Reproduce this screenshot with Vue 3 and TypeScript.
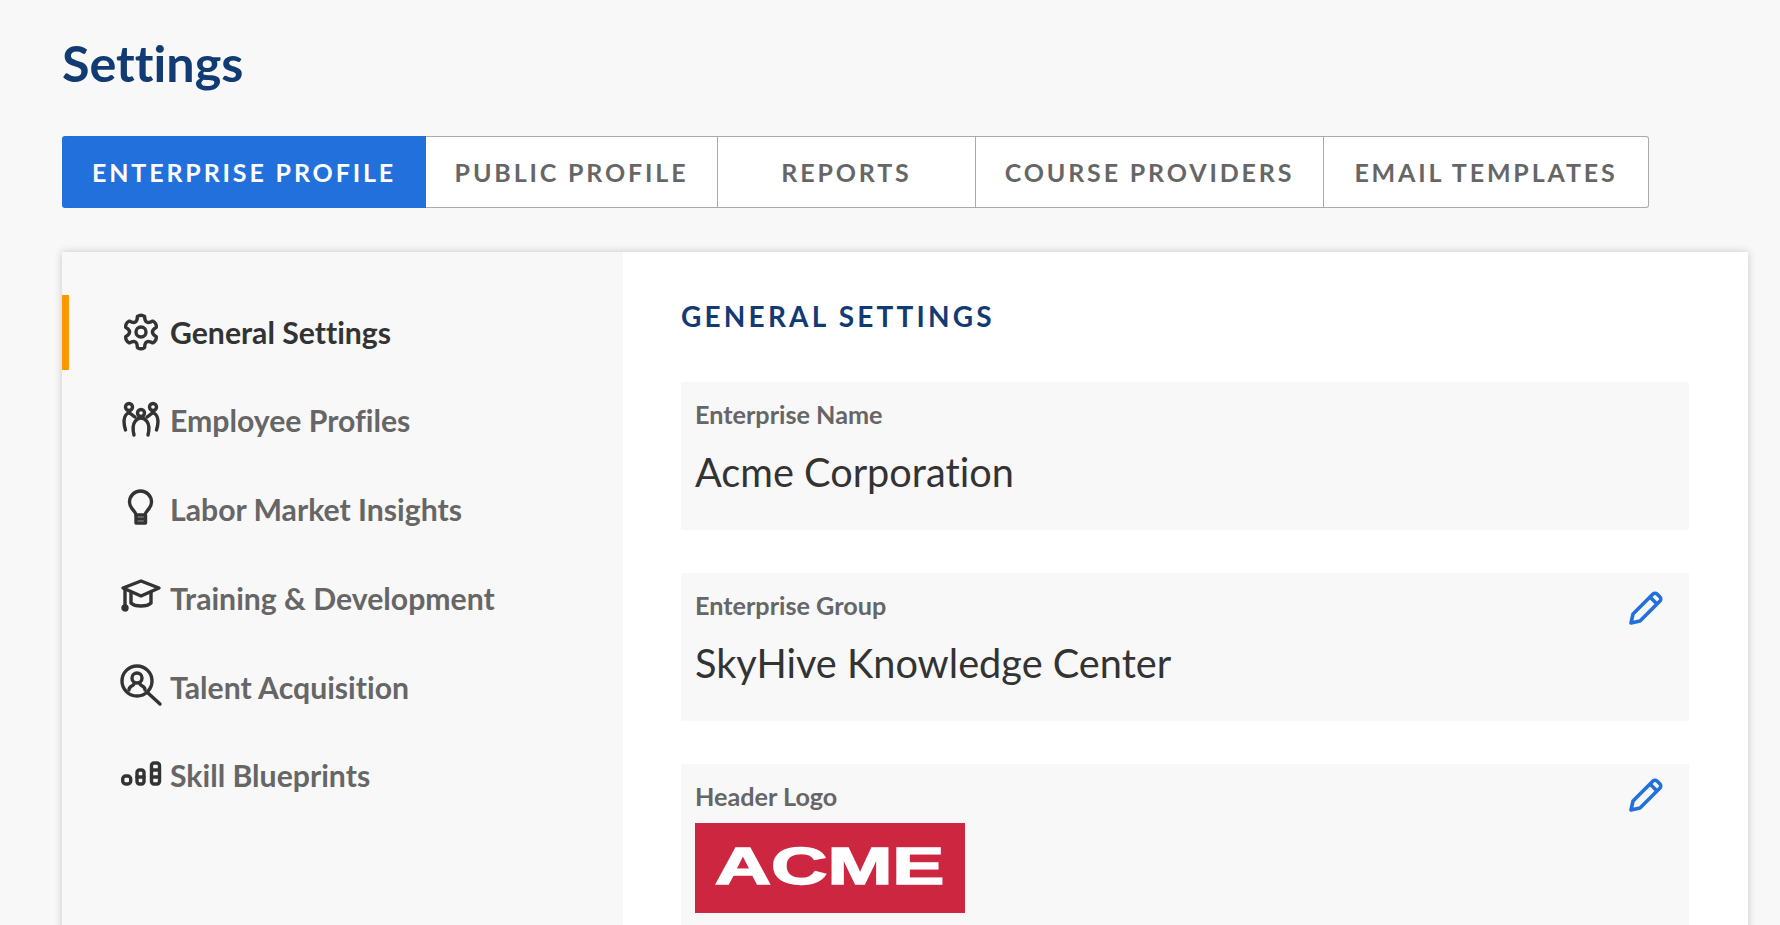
<script setup lang="ts">
const tabs = [
  { label: 'ENTERPRISE PROFILE', width: 364, active: true },
  { label: 'PUBLIC PROFILE', width: 292, active: false },
  { label: 'REPORTS', width: 258, active: false },
  { label: 'COURSE PROVIDERS', width: 348, active: false },
  { label: 'EMAIL TEMPLATES', width: 325, active: false },
]
const navItems = [
  { label: 'General Settings', icon: 'gear', active: true },
  { label: 'Employee Profiles', icon: 'people', active: false },
  { label: 'Labor Market Insights', icon: 'bulb', active: false },
  { label: 'Training & Development', icon: 'cap', active: false },
  { label: 'Talent Acquisition', icon: 'search', active: false },
  { label: 'Skill Blueprints', icon: 'bars', active: false },
]

function polar(deg: number, radius: number): string {
  const rad = (deg * Math.PI) / 180
  return `${(20 + radius * Math.cos(rad)).toFixed(2)} ${(20 + radius * Math.sin(rad)).toFixed(2)}`
}

function gearPath(): string {
  const outer = 16
  const inner = 7.5
  let d = `M${polar(-90 - 13, outer)}`
  for (let k = 0; k < 6; k++) {
    const a = -90 + 60 * k
    d += ` Q${polar(a, outer + 2)} ${polar(a + 13, outer)}`
    d += ` Q${polar(a + 30, inner)} ${polar(a + 47, outer)}`
  }
  return d + 'Z'
}
const gear = gearPath()
</script>

<template>
  <div class="page">
    <h1 class="title">Settings</h1>
    <div class="tabs">
      <div
        v-for="t in tabs"
        :key="t.label"
        class="tab"
        :class="{ active: t.active }"
        :style="{ width: t.width + 'px' }"
      >{{ t.label }}</div>
    </div>
    <div class="card">
      <aside class="side">
        <div v-for="n in navItems" :key="n.label" class="nav" :class="{ on: n.active }">
          <svg class="ico" viewBox="0 0 40 40" fill="none" stroke="#333" stroke-width="3.400" stroke-linecap="round" stroke-linejoin="round">
            <template v-if="n.icon === 'gear'">
              <path :d="gear" />
              <circle cx="20" cy="20" r="5" />
            </template>
            <template v-else-if="n.icon === 'people'">
              <circle cx="8" cy="7" r="3.500" />
              <circle cx="20" cy="13" r="3.500" />
              <circle cx="32" cy="7" r="3.500" />
              <path d="M14 17c-2-1-4-4-6-4s-5 3-5 8c0 3 .5 6 1.500 9M26 17c2-1 4-4 6-4s5 3 5 8c0 3-.5 6-1.500 9" />
              <path d="M13 35c-1.500-6-1.500-10 1-13.500 1-1.500 3-3.500 6-3.500s5 2 6 3.500c2.500 3.500 2.500 7.500 1 13.500" />
            </template>
            <template v-else-if="n.icon === 'bulb'">
              <path d="M15 26c0-4-6.500-6-6.500-13a11 11 0 0 1 22 0c0 7-6.500 9-6.500 13z" />
              <path d="M15 26v8h9.500v-8M15 30h9.500" />
            </template>
            <template v-else-if="n.icon === 'cap'">
              <path d="M20 3 38 10 20 18 2 10z" />
              <path d="M10 15v10c4 4 16 4 20 0V14" />
              <path d="M4 11v17" />
              <circle cx="4" cy="30" r="2" fill="#333" />
            </template>
            <template v-else-if="n.icon === 'search'">
              <circle cx="16" cy="14" r="15" />
              <circle cx="16" cy="11" r="5" />
              <path d="M8 23c0-4 3-3 5-6M24 23c0-4-3-3-5-6M27 26l12 11" />
            </template>
            <template v-else>
              <rect x="1.700" y="21" width="8" height="8" rx="3" />
              <rect x="16" y="15" width="7" height="14" rx="2.500" />
              <path d="M16 22h7" />
              <rect x="30.500" y="8" width="8" height="21" rx="2.500" />
              <path d="M30.500 15h8M30.500 22h8" />
            </template>
          </svg>
          <span class="nav-label">{{ n.label }}</span>
        </div>
      </aside>
      <main class="main">
        <h2 class="heading">GENERAL SETTINGS</h2>
        <section class="field">
          <div class="label">Enterprise Name</div>
          <div class="value">Acme Corporation</div>
        </section>
        <section class="field">
          <div class="label">Enterprise Group</div>
          <div class="value">SkyHive Knowledge Center</div>
          <svg class="pen" viewBox="0 0 34 34" fill="none" stroke="#2270dc" stroke-width="3.600" stroke-linejoin="round">
            <path d="M2 32l2-9L24 3c1-1 3-1 4 0l3 3c1 1 1 3 0 4L11 30z" />
            <path d="M21 6l7 7" />
          </svg>
        </section>
        <section class="field logo-field">
          <div class="label">Header Logo</div>
          <div class="logo"><span class="logo-text">ACME</span></div>
          <svg class="pen pen-logo" viewBox="0 0 34 34" fill="none" stroke="#2270dc" stroke-width="3.600" stroke-linejoin="round">
            <path d="M2 32l2-9L24 3c1-1 3-1 4 0l3 3c1 1 1 3 0 4L11 30z" />
            <path d="M21 6l7 7" />
          </svg>
        </section>
      </main>
    </div>
  </div>
</template>

<style>
html, body { margin: 0; background: #f8f8f8; overflow: hidden; }
</style>

<style scoped>
.page {
  height: 925px;
  box-sizing: border-box;
  padding: 30px 32px 0 62px;
  font-family: Lato, "Open Sans", sans-serif;
  font-variant-ligatures: none;
  overflow: hidden;
}
.title {
  margin: 0 0 41px;
  font-size: 50.300px;
  line-height: 65px;
  font-weight: 700;
  color: #123a73;
}
.tabs { display: flex; height: 72px; }
.tab {
  box-sizing: border-box;
  display: flex;
  align-items: center;
  justify-content: center;
  background: #fff;
  border: 1px solid #aaa;
  border-left: 0;
  color: #666;
  font-size: 25px;
  font-weight: 700;
  letter-spacing: 2.850px;
}
.tab:last-child { border-radius: 0 3px 3px 0; }
.tab.active {
  background: #2270dc;
  border: 0;
  color: #fff;
  border-radius: 3px 0 0 3px;
}
.card {
  margin-top: 44px;
  display: flex;
  width: 1686px;
  height: 800px;
  background: #fff;
  box-shadow: 0 0 8px rgba(0, 0, 0, 0.2);
}
.side {
  width: 561px;
  flex: none;
  background: #f8f8f8;
  padding-top: 43px;
}
.nav {
  height: 75px;
  margin-bottom: 13.750px;
  box-sizing: border-box;
  padding: 0 0 2px 59px;
  display: flex;
  align-items: center;
  gap: 9px;
  font-size: 30.200px;
  font-weight: 700;
  color: #666;
}
.nav.on { color: #333; border-left: 7px solid #ff9800; padding-left: 52px; }
.ico { width: 40px; height: 40px; flex: none; overflow: visible; }
.main { flex: 1; padding: 46px 0 0 58px; }
.heading {
  margin: 0 0 48px;
  font-size: 28px;
  line-height: 36px;
  font-weight: 700;
  letter-spacing: 3.200px;
  color: #123a73;
}
.field {
  position: relative;
  width: 1008px;
  height: 147.500px;
  box-sizing: border-box;
  padding: 16px 14px 0;
  margin-bottom: 43.500px;
  background: #f8f8f8;
}
.label {
  font-size: 25.200px;
  line-height: 33px;
  font-weight: 700;
  color: #666;
}
.value {
  margin-top: 13.500px;
  font-size: 39.700px;
  line-height: 54px;
  color: #333;
}
.pen { position: absolute; top: 18px; right: 26px; width: 34px; height: 34px; }
.pen-logo { top: 14px; }
.logo-field { height: 260px; }
.logo {
  width: 270px;
  height: 90px;
  margin-top: 10px;
  background: #cc2640;
  display: flex;
  align-items: center;
  justify-content: center;
  overflow: hidden;
}
.logo-text {
  font-family: "Liberation Sans", sans-serif;
  font-weight: 700;
  font-size: 52px;
  line-height: 1;
  color: #fff;
  -webkit-text-stroke: 1.500px #fff;
  transform: scaleX(1.5) translateY(-2px);
}
</style>
